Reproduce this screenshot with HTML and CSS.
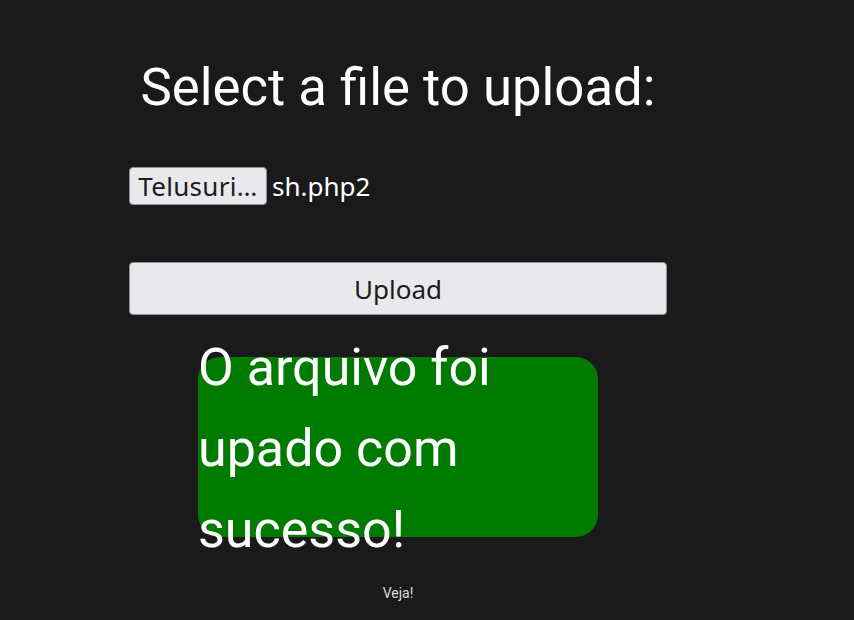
FILE: index.html
```html
<!DOCTYPE html>
<html lang="pt">
<head>
<meta charset="utf-8">
<title>Upload</title>
<link rel="stylesheet" href="styles.css">
</head>
<body>
<main class="page">
  <h1 class="title">Select a file to upload:</h1>
  <form class="form">
    <div class="file-row">
      <button type="button" class="file-btn">Telusuri…</button>
      <span class="file-name">sh.php2</span>
    </div>
    <button type="button" class="upload-btn">Upload</button>
  </form>
  <div class="success">
    <p class="success-text">O arquivo foi upado com sucesso!</p>
  </div>
  <p class="veja">Veja!</p>
</main>
</body>
</html>
```

FILE: styles.css
```css
html, body {
  margin: 0;
  padding: 0;
  background: #1b1b1b;
  height: 100%;
}
body {
  font-family: Roboto, "Noto Sans", sans-serif;
  color: #ffffff;
  overflow: hidden;
}
.page {
  width: 672px;
  margin-left: 62px;
  min-height: 620px;
  background: #1a1a1a;
  display: flex;
  flex-direction: column;
  align-items: center;
}
.title {
  margin: 52px 0 0 0;
  font-size: 52.7px;
  font-weight: 400;
  line-height: 70px;
  text-align: center;
}
.form {
  width: 538px;
  margin-top: 45px;
  display: flex;
  flex-direction: column;
}
.file-row {
  display: flex;
  align-items: center;
  height: 38px;
}
.file-btn {
  height: 38px;
  width: 138px;
  padding: 0 2px;
  background: #e9e8ed;
  border: 1px solid #8f8f9d;
  border-radius: 4px;
  font-family: "Noto Sans", sans-serif;
  font-size: 26px;
  letter-spacing: 0.3px;
  color: #1b1b1b;
  white-space: nowrap;
  box-sizing: border-box;
}
.file-name {
  margin-left: 5px;
  font-family: "Noto Sans", sans-serif;
  font-size: 26px;
  color: #ffffff;
}
.upload-btn {
  margin-top: 57px;
  height: 53px;
  width: 538px;
  background: #e9e8ed;
  border: 1px solid #8f8f9d;
  border-radius: 4px;
  font-family: "Noto Sans", sans-serif;
  font-size: 26px;
  color: #1b1b1b;
  box-sizing: border-box;
}
.success {
  margin-top: 42px;
  width: 400px;
  height: 180px;
  background: #007b00;
  border-radius: 22px;
}
.success-text {
  margin: -30px 0 0 0;
  font-size: 52px;
  line-height: 81px;
  color: #ffffff;
}
.veja {
  margin: 48px 0 0 0;
  font-size: 14px;
  line-height: 16px;
  color: #dddddd;
}
```
